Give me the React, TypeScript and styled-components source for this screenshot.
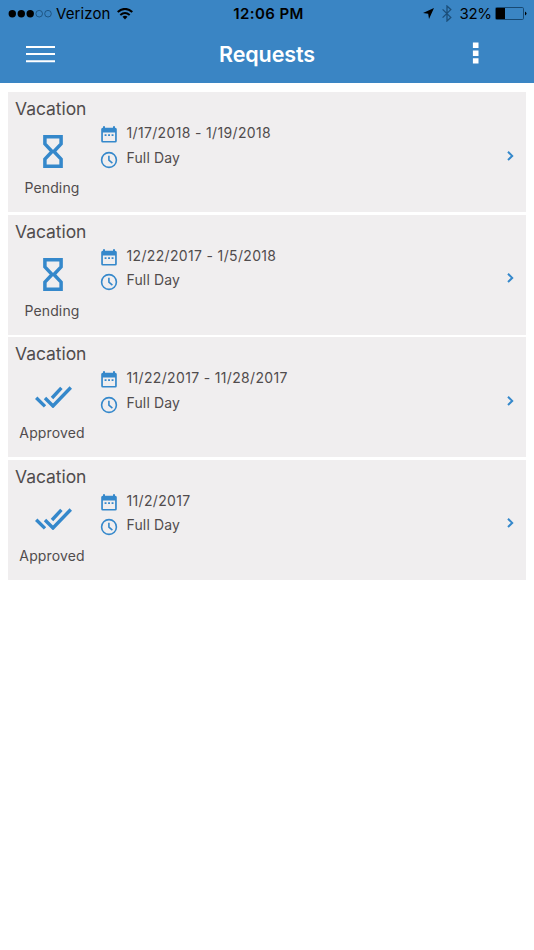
import React from "react";
import styled, { createGlobalStyle } from "styled-components";

const BLUE = "#3a85c4";
const ACCENT = "#3588cb";

const GlobalStyle = createGlobalStyle`
  *, *::before, *::after { box-sizing: border-box; }
  body {
    margin: 0;
    background: #fff;
    font-family: Inter, "Liberation Sans", sans-serif;
    color: #504c4d;
  }
  svg { display: block; flex: none; }
`;

const Screen = styled.div`
  min-height: 950px;
  background: #fff;
`;

const Header = styled.header`
  height: 83px;
  background: ${BLUE};
`;

const StatusBar = styled.div`
  height: 27px;
  padding: 0 7px 0 8px;
  display: grid;
  grid-template-columns: 1fr auto 1fr;
  align-items: center;
  color: #000;
`;

const StatusGroup = styled.div<{ $end?: boolean }>`
  display: flex;
  align-items: center;
  justify-content: ${(p) => (p.$end ? "flex-end" : "flex-start")};
`;

const StatusText = styled.span<{ $bold?: boolean; $spacing?: number }>`
  font-size: 15px;
  line-height: 27px;
  font-weight: ${(p) => (p.$bold ? 600 : 400)};
  letter-spacing: ${(p) => p.$spacing ?? 0}px;
  white-space: nowrap;
`;

const Time = styled(StatusText)`
  padding-left: 2px;
`;

const NavBar = styled.div`
  height: 56px;
  display: grid;
  grid-template-columns: 117px 1fr 117px;
  align-items: start;
`;

const MenuButton = styled.button`
  width: 29px;
  height: 56px;
  margin-left: 26px;
  padding: 0;
  border: 0;
  background: none;
  color: #fff;
`;

const MoreButton = styled(MenuButton)`
  width: 7px;
  margin-left: 55px;
`;

const Title = styled.h1`
  margin: 0;
  text-align: center;
  font-size: 21.5px;
  line-height: 54px;
  font-weight: 600;
  letter-spacing: -0.1px;
  color: #fff;
`;

const List = styled.main`
  display: flex;
  flex-direction: column;
  gap: 2.5px;
  padding: 9px 8px 0;
`;

const Card = styled.article`
  height: 120px;
  background: #f0eeef;
`;

const CardTitle = styled.h2`
  margin: 0;
  padding-left: 7px;
  font-size: 17.5px;
  line-height: 34.5px;
  height: 34px;
  font-weight: 400;
  letter-spacing: -0.05px;
`;

const CardBody = styled.div`
  display: grid;
  grid-template-columns: 92px 1fr 19px;
  align-items: start;
`;

const Status = styled.div`
  width: 88px;
  display: flex;
  flex-direction: column;
  align-items: center;
`;

const StatusIcon = styled.div`
  height: 51px;
  padding-left: 2px;
  display: flex;
  align-items: center;
  color: ${ACCENT};
`;

const StatusLabel = styled.span`
  font-size: 14px;
  line-height: 22px;
  letter-spacing: 0.12px;
`;

const Details = styled.div`
  display: flex;
  flex-direction: column;
`;

const Detail = styled.div<{ $spacing: number }>`
  height: 24.5px;
  display: flex;
  align-items: flex-start;
  gap: 8.5px;
  font-size: 14px;
  line-height: 13.5px;
  letter-spacing: ${(p) => p.$spacing}px;
  white-space: nowrap;
  svg { color: ${ACCENT}; }
`;

const Arrow = styled.div`
  height: 59px;
  display: flex;
  align-items: center;
  color: ${ACCENT};
`;

const Signal = () => (
  <svg width="44" height="10" viewBox="0 0 44 10">
    {[4.3, 13.3, 22.2].map((x) => (
      <circle key={x} cx={x} cy="4.7" r="3.7" />
    ))}
    {[31.2, 40].map((x) => (
      <circle key={x} cx={x} cy="4.7" r="3.3" fill="none" stroke="#174973" strokeWidth="0.8" />
    ))}
  </svg>
);

const Wifi = () => (
  <svg width="16" height="12" viewBox="0 0 16 12" fill="none" stroke="#000" strokeWidth="2">
    <path d="M.7 4.1Q8-2.3 15.3 4.1" />
    <path d="M3.3 7Q8 2.9 12.7 7" />
    <path d="M5.5 8.7Q8 6.8 10.5 8.7L8 11.6Z" fill="#000" stroke="none" />
  </svg>
);

const Location = () => (
  <svg width="11" height="11" viewBox="0 0 11 11">
    <path d="M11 0 6 11 5.2 5.8 0 5Z" />
  </svg>
);

const Bluetooth = () => (
  <svg width="10" height="17" viewBox="0 0 10 17" fill="none" stroke="#1b4e79" strokeWidth="1.3">
    <path d="m.6 4.4 8.2 8L5 16V1l3.8 3.6-8.2 8" />
  </svg>
);

const Battery = () => (
  <svg width="32" height="13" viewBox="0 0 32 13">
    <rect x=".5" y=".5" width="28" height="12" rx="1.2" fill="none" stroke="#174973" />
    <path d="M1 1h9v11H1Z" />
    <path d="M30 4.5q3 2 0 4Z" />
  </svg>
);

const MenuLines = () => (
  <svg width="29" height="56" viewBox="0 0 29 56" stroke="currentColor" strokeWidth="2">
    <path d="M0 20h29M0 27h29M0 34.2h29" />
  </svg>
);

const MoreDots = () => (
  <svg width="7" height="56" viewBox="0 0 7 56" fill="currentColor">
    <path d="M.9 15.6h5.6v5.4H.9zM.9 23.4h5.6v5.5H.9zM.9 31.2h5.6v5.4H.9z" />
  </svg>
);

const Hourglass = () => (
  <svg width="20" height="33" viewBox="0 0 20 33" fill="none" stroke="currentColor" strokeWidth="3.5">
    <path d="M1.9 1.8h16.2v7.1L10.9 16.5l7.2 7.6v7.1H1.9v-7.1l7.2-7.6L1.9 8.9Z" />
  </svg>
);

const DoubleCheck = () => (
  <svg width="37" height="22" viewBox="0 0 37 22" fill="none" stroke="currentColor" strokeWidth="3.4">
    <path d="m1.2 11.8 8.8 8.6M10 12l8 8L35.8 1.5M17 12 26.4 1.8" />
  </svg>
);

const Calendar = () => (
  <svg width="18" height="18" viewBox="0 0 18 18" fill="currentColor">
    <path
      fillRule="evenodd"
      d="M3 .2h2V1.8h8V.2h2v1.6h.3q1.5 0 1.5 1.5V15q0 1.6-1.5 1.6h-12.6Q1.2 16.6 1.2 15V3.3q0-1.5 1.5-1.5H3ZM2.9 6.5v8.5h12.2V6.5Z"
    />
    <path d="M4.6 8.2h1.9v1.7H4.6zM8.1 8.2H10v1.7H8.1zM11.6 8.2h1.9v1.7h-1.9z" />
  </svg>
);

const Clock = () => (
  <svg width="18" height="18" viewBox="0 0 18 18" fill="none" stroke="currentColor" strokeWidth="1.6">
    <circle cx="9" cy="9" r="7.4" />
    <path d="M8.9 4.8v4.4l3.5 3" />
  </svg>
);

const Chevron = () => (
  <svg width="7" height="10" viewBox="0 0 7 10" fill="none" stroke="currentColor" strokeWidth="2">
    <path d="m1 .8 4.2 4.1L1 9" />
  </svg>
);

type Request = { date: string; status: "Pending" | "Approved" };

const requests: Request[] = [
  { date: "1/17/2018 - 1/19/2018", status: "Pending" },
  { date: "12/22/2017 - 1/5/2018", status: "Pending" },
  { date: "11/22/2017 - 11/28/2017", status: "Approved" },
  { date: "11/2/2017", status: "Approved" },
];

const RequestCard = ({ date, status }: Request) => (
  <Card>
    <CardTitle>Vacation</CardTitle>
    <CardBody>
      <Status>
        <StatusIcon>{status === "Pending" ? <Hourglass /> : <DoubleCheck />}</StatusIcon>
        <StatusLabel>{status}</StatusLabel>
      </Status>
      <Details>
        <Detail $spacing={0.34}>
          <Calendar />
          {date}
        </Detail>
        <Detail $spacing={0.15}>
          <Clock />
          Full Day
        </Detail>
      </Details>
      <Arrow>
        <Chevron />
      </Arrow>
    </CardBody>
  </Card>
);

const Carrier = styled(StatusGroup)`
  gap: 4px;
  svg:last-child { margin-left: 3px; }
`;

const Indicators = styled(StatusGroup)`
  gap: 8px;
  svg:last-child { margin-left: -4.5px; }
`;

export default function App() {
  return (
    <Screen>
      <GlobalStyle />
      <Header>
        <StatusBar>
          <Carrier>
            <Signal />
            <StatusText $spacing={0.1}>Verizon</StatusText>
            <Wifi />
          </Carrier>
          <Time $bold $spacing={0.4}>12:06 PM</Time>
          <Indicators $end>
            <Location />
            <Bluetooth />
            <StatusText $spacing={-0.4}>32%</StatusText>
            <Battery />
          </Indicators>
        </StatusBar>
        <NavBar>
          <MenuButton aria-label="Menu">
            <MenuLines />
          </MenuButton>
          <Title>Requests</Title>
          <MoreButton aria-label="More">
            <MoreDots />
          </MoreButton>
        </NavBar>
      </Header>
      <List>
        {requests.map((r) => (
          <RequestCard key={r.date} {...r} />
        ))}
      </List>
    </Screen>
  );
}
